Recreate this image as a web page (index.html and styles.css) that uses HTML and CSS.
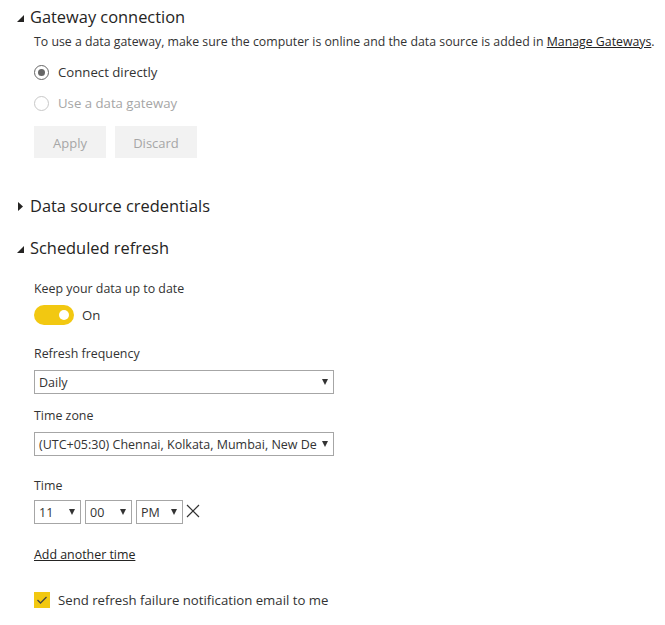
FILE: index.html
```html
<!DOCTYPE html>
<html lang="en">
<head>
    <meta charset="UTF-8">
    <meta name="viewport" content="width=device-width, initial-scale=1.0">
    <title>Dataset settings</title>
    <link rel="stylesheet" href="styles.css">
</head>
<body>
    <div class="settings">
        <h2 class="section-title open">
            <svg class="caret" width="7" height="7" viewBox="0 0 7 7"><path d="M7 0 L7 7 L0 7 Z" /></svg>
            Gateway connection
        </h2>
        <p class="desc">To use a data gateway, make sure the computer is online and the data source is added in <a href="#" class="link">Manage Gateways</a>.</p>
        <div class="radio-row first">
            <span class="radio checked"></span>
            <span>Connect directly</span>
        </div>
        <div class="radio-row disabled">
            <span class="radio"></span>
            <span>Use a data gateway</span>
        </div>
        <div class="buttons">
            <button class="btn apply" disabled>Apply</button>
            <button class="btn discard" disabled>Discard</button>
        </div>

        <h2 class="section-title closed">
            <svg class="caret" width="7" height="9" viewBox="0 0 5 9"><path d="M0 0 L5 4.5 L0 9 Z" /></svg>
            Data source credentials
        </h2>

        <h2 class="section-title open third">
            <svg class="caret" width="7" height="7" viewBox="0 0 7 7"><path d="M7 0 L7 7 L0 7 Z" /></svg>
            Scheduled refresh
        </h2>
        <div class="field-label keep">Keep your data up to date</div>
        <div class="toggle-row">
            <span class="toggle"><span class="knob"></span></span>
            <span>On</span>
        </div>

        <div class="field-label freq">Refresh frequency</div>
        <div class="dropdown wide">
            <span>Daily</span>
            <span class="arrow"></span>
        </div>

        <div class="field-label zone">Time zone</div>
        <div class="dropdown wide">
            <span>(UTC+05:30) Chennai, Kolkata, Mumbai, New De</span>
            <span class="arrow"></span>
        </div>

        <div class="field-label time">Time</div>
        <div class="time-row">
            <div class="dropdown small"><span>11</span><span class="arrow"></span></div>
            <div class="dropdown small"><span>00</span><span class="arrow"></span></div>
            <div class="dropdown small"><span>PM</span><span class="arrow"></span></div>
            <svg class="remove" width="14" height="14" viewBox="0 0 14 14"><path d="M1 1 L13 13 M13 1 L1 13" /></svg>
        </div>

        <a href="#" class="link add-time">Add another time</a>

        <div class="check-row">
            <span class="checkbox">
                <svg width="16" height="16" viewBox="0 0 16 16"><path d="M3.5 8 L6.5 11 L12.5 5" /></svg>
            </span>
            <span>Send refresh failure notification email to me</span>
        </div>
    </div>
</body>
</html>
```

FILE: styles.css
```css
body {
    font-family: "Open Sans", "Noto Sans", Arial, sans-serif;
    color: #333;
    background: #fff;
    margin: 0;
    padding: 5px 0 0 0;
}

.settings {
    display: flex;
    flex-direction: column;
    align-items: flex-start;
}

.section-title {
    display: flex;
    align-items: center;
    margin: 0;
    padding-left: 17px;
    font-size: 16.4px;
    font-weight: normal;
    line-height: 24px;
    color: #252423;
}

.section-title .caret {
    fill: #252423;
    margin-right: 6px;
}

.section-title.open .caret {
    margin-top: 3px;
}

.section-title.closed {
    margin-top: 36px;
}

.section-title.third {
    margin-top: 18px;
}

.desc {
    margin: 4px 0 0 34px;
    font-size: 12.32px;
    line-height: 18px;
    color: #333;
}

.link {
    color: #252423;
    text-decoration: underline;
}

.radio-row {
    display: flex;
    align-items: center;
    margin: 11px 0 0 34px;
    height: 20px;
    font-size: 13.2px;
    color: #333;
}

.radio {
    width: 15px;
    height: 15px;
    border: 1px solid #666;
    border-radius: 50%;
    margin-right: 9px;
    box-sizing: border-box;
    display: flex;
    align-items: center;
    justify-content: center;
}

.radio.checked::after {
    content: "";
    width: 7px;
    height: 7px;
    border-radius: 50%;
    background: #666;
}

.radio-row.disabled {
    color: #a6a6a6;
}

.radio-row.disabled .radio {
    border-color: #c8c8c8;
}

.buttons {
    display: flex;
    gap: 9px;
    margin: 13px 0 0 34px;
}

.btn {
    height: 32px;
    border: none;
    background: #f2f2f2;
    color: #a6a6a6;
    font-family: inherit;
    font-size: 13px;
    padding: 2px 0 0 0;
}

.btn.apply {
    width: 72px;
}

.btn.discard {
    width: 82px;
}

.field-label {
    margin-left: 34px;
    font-size: 12.4px;
    line-height: 18px;
    color: #333;
}

.field-label.keep {
    margin-top: 20px;
}

.field-label.freq {
    margin-top: 20px;
}

.field-label.zone {
    margin-top: 13px;
}

.field-label.time {
    margin-top: 21px;
}

.toggle-row {
    display: flex;
    align-items: center;
    margin: 7px 0 0 34px;
    font-size: 13.2px;
}

.toggle {
    width: 40px;
    height: 20px;
    border-radius: 10px;
    background: #f2c811;
    display: flex;
    align-items: center;
    justify-content: flex-end;
    padding-right: 5px;
    box-sizing: border-box;
    margin-right: 8px;
}

.knob {
    width: 10px;
    height: 10px;
    border-radius: 50%;
    background: #fff;
}

.dropdown {
    display: flex;
    align-items: center;
    justify-content: space-between;
    height: 24px;
    border: 1px solid #a6a6a6;
    box-sizing: border-box;
    padding: 1px 5px 0 4px;
    font-size: 12.5px;
    color: #333;
    white-space: nowrap;
    overflow: hidden;
}

.dropdown.wide {
    width: 300px;
    margin: 7px 0 0 34px;
}

.dropdown .arrow {
    width: 0;
    height: 0;
    border-left: 3.5px solid transparent;
    border-right: 3.5px solid transparent;
    border-top: 6px solid #333;
    flex-shrink: 0;
    margin-left: 4px;
    margin-top: -2px;
}

.time-row {
    display: flex;
    align-items: center;
    gap: 4px;
    margin: 5px 0 0 34px;
}

.dropdown.small {
    width: 47px;
}

.remove {
    margin-left: -1px;
    margin-top: -2px;
    stroke: #333;
    stroke-width: 1.2;
    fill: none;
}

.add-time {
    margin: 22px 0 0 34px;
    font-size: 12.4px;
    line-height: 18px;
}

.check-row {
    display: flex;
    align-items: center;
    margin: 26px 0 0 34px;
    height: 20px;
    font-size: 13.2px;
    color: #333;
}

.checkbox {
    width: 16px;
    height: 16px;
    background: #f2c811;
    margin-right: 8px;
    display: flex;
}

.checkbox svg {
    stroke: #444;
    stroke-width: 1.3;
    fill: none;
}
```
